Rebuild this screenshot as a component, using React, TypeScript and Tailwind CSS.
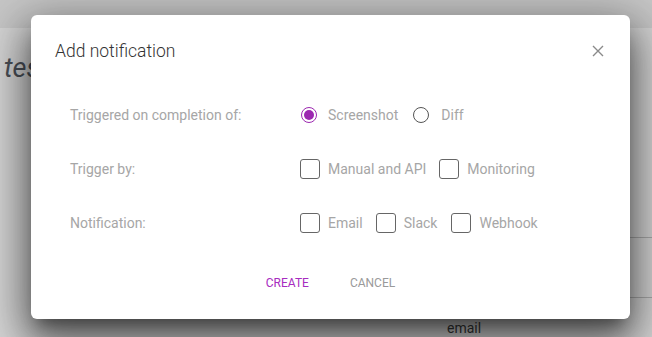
import React, { useState } from 'react';

const Radio = ({ checked }: { checked: boolean }) => (
  <span
    className={`flex h-[16px] w-[16px] items-center justify-center rounded-full border-[1.5px] ${
      checked ? 'border-[#9c27b0]' : 'border-[#555]'
    }`}
  >
    {checked && <span className="h-[10px] w-[10px] rounded-full bg-[#9c27b0]" />}
  </span>
);

const Box = () => <span className="block h-[20px] w-[20px] rounded-[3px] border border-[#666]" />;

export default function App() {
  const [trigger, setTrigger] = useState('screenshot');

  return (
    <div className="relative h-[337px] w-[652px] overflow-hidden bg-[#d4d4d4] font-['Roboto',sans-serif]">
      {/* page behind the overlay */}
      <div className="h-[28px] bg-[#c6c6c6]" />
      <div className="flex">
        <div className="w-[30px] pl-[4px] pt-[20px] text-[27px] italic text-[#4a4f57]">tes</div>
        <div className="flex-1" />
        <div className="w-[30px] pt-[209px]">
          <div className="h-px bg-[#a9a9a9]" />
          <div className="h-[59px]" />
          <div className="h-px bg-[#a9a9a9]" />
        </div>
      </div>
      <div className="absolute left-[447px] top-[318px] text-[14px] text-[#3a3a3a]">email</div>

      {/* dialog */}
      <div className="absolute left-[31px] top-[15px] h-[304px] w-[599px] rounded-[6px] bg-white shadow-[0_11px_15px_-7px_rgba(0,0,0,0.4),0_24px_38px_3px_rgba(0,0,0,0.38),0_9px_46px_8px_rgba(0,0,0,0.3)]">
        <div className="flex items-start justify-between pl-[24px] pr-[26px] pt-[24px]">
          <h2 className="text-[17.5px] font-light leading-[24px] text-[#333]">Add notification</h2>
          <svg width="12" height="12" viewBox="0 0 12 12" className="mt-[6px]">
            <path d="M1 1L11 11M11 1L1 11" stroke="#8a8a8a" strokeWidth="1.4" />
          </svg>
        </div>

        <div className="mt-[42px] flex flex-col gap-[34px] pl-[39px] text-[14px] text-[#a6a6a6]">
          <div className="flex h-[20px] items-center">
            <span className="w-[230px]">Triggered on completion of:</span>
            <button className="flex items-center gap-[11px] pl-[1px]" onClick={() => setTrigger('screenshot')}>
              <Radio checked={trigger === 'screenshot'} />
              <span>Screenshot</span>
            </button>
            <button className="ml-[15px] flex items-center gap-[12px]" onClick={() => setTrigger('diff')}>
              <Radio checked={trigger === 'diff'} />
              <span>Diff</span>
            </button>
          </div>
          <div className="flex h-[20px] items-center">
            <span className="w-[230px]">Trigger by:</span>
            <label className="flex items-center gap-[8px]">
              <Box />
              <span>Manual and API</span>
            </label>
            <label className="ml-[13px] flex items-center gap-[8px]">
              <Box />
              <span>Monitoring</span>
            </label>
          </div>
          <div className="flex h-[20px] items-center">
            <span className="w-[230px]">Notification:</span>
            <label className="flex items-center gap-[8px]">
              <Box />
              <span>Email</span>
            </label>
            <label className="ml-[13px] flex items-center gap-[8px]">
              <Box />
              <span>Slack</span>
            </label>
            <label className="ml-[14px] flex items-center gap-[8px]">
              <Box />
              <span>Webhook</span>
            </label>
          </div>
        </div>

        <div className="mt-[41px] flex justify-center gap-[41px] text-[12px]">
          <button className="uppercase text-[#a72cc0]">Create</button>
          <button className="uppercase text-[#9a9a9a]">Cancel</button>
        </div>
      </div>
    </div>
  );
}
